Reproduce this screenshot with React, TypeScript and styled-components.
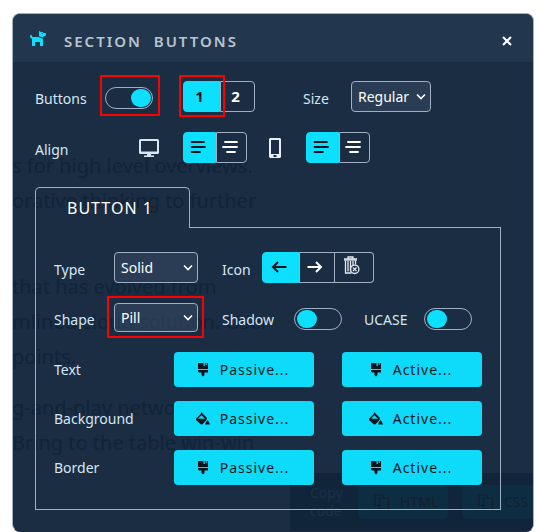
import React, { useId, useState } from "react";
import styled, { createGlobalStyle, css } from "styled-components";
import { FaDog } from "react-icons/fa";

const c = {
  panel: "#1b2d42",
  header: "#22374d",
  field: "rgba(54, 75, 100, 0.55)",
  line: "#a0b0c4",
  label: "#d5e6f5",
  accent: "#0ddfff",
  ink: "#0b1620",
  ghost: "#10243a",
};

const GlobalStyle = createGlobalStyle`
  *, *::before, *::after { box-sizing: border-box; }
  body { margin: 0; background: #fff; overflow: hidden; }
  body, button, input, select { font-family: "Noto Sans", "Open Sans", sans-serif; font-size: 14px; }
`;

const Page = styled.main`
  padding: 13px 6px 0 12px;
`;

const Panel = styled.section`
  position: relative;
  overflow: hidden;
  isolation: isolate;
  padding-bottom: 21px;
  border: 1px solid ${c.line};
  border-bottom-color: ${c.panel};
  border-radius: 8px;
  background: ${c.panel};
  color: ${c.label};
`;

const Backdrop = styled.div`
  position: absolute;
  inset: 0;
  z-index: -1;
  color: ${c.ghost};
  pointer-events: none;
`;

const Article = styled.div`
  position: absolute;
  top: 134px;
  left: -1px;
  font-size: 20px;
  line-height: 35px;
  white-space: pre;
  p { margin: 0 0 16px; min-height: 35px; }
`;

const CopyBar = styled.div`
  position: absolute;
  top: 459px;
  left: 277px;
  right: -60px;
  bottom: 0;
  display: flex;
  align-items: center;
  gap: 14px;
  padding-left: 20px;
  border-radius: 6px 0 0 0;
  background: #10243a;
  color: #1d3146;
  line-height: 18px;
`;

const CopyLabel = styled.span`
  flex: none;
  width: 34px;
`;

const CopyChip = styled.span`
  display: flex;
  flex: none;
  align-items: center;
  gap: 10px;
  width: 90px;
  height: 34px;
  padding-left: 16px;
  border-radius: 4px;
  background: #0c2d42;
  color: #14202f;
`;

const Header = styled.header`
  display: flex;
  align-items: center;
  height: 48px;
  padding: 5px 19px 0 16px;
  background: ${c.header};
`;

const DogIcon = styled(FaDog)`
  width: 18px;
  height: 18px;
  margin-bottom: 6px;
  color: ${c.accent};
`;

const Title = styled.h1`
  flex: 1;
  margin: 0 0 0 17px;
  color: #b9c4d0;
  font-size: 15px;
  font-weight: 600;
  letter-spacing: 2px;
  white-space: pre;
`;

const CloseButton = styled.button`
  display: flex;
  padding: 2px;
  border: 0;
  background: none;
  color: #fff;
  cursor: pointer;
`;

const Row = styled.div<{ $cols: string; $height?: number }>`
  display: grid;
  grid-template-columns: ${(p) => p.$cols};
  align-items: center;
  height: ${(p) => p.$height ?? 31}px;
`;

const Toolbar = styled.div`
  display: grid;
  gap: 20px;
  padding: 19px 22px 24px;
`;

const labelText = css`
  padding-top: 4px;
  line-height: 20px;
`;

const Label = styled.label`
  ${labelText}
`;

const Caption = styled.span<{ $flush?: boolean }>`
  ${labelText}
  ${(p) => p.$flush && "padding-top: 0;"}
`;

const Marked = styled.span<{ $inset?: string }>`
  position: relative;
  display: flex;
  width: fit-content;
  ${(p) =>
    p.$inset &&
    css`
      &::after {
        content: "";
        position: absolute;
        z-index: 1;
        inset: ${p.$inset};
        border: 2px solid #ff0000;
        pointer-events: none;
      }
    `}
`;

const Switch = styled.input`
  appearance: none;
  width: 48px;
  height: 22px;
  margin: 3px 0 0;
  padding: 1px;
  border: 1px solid ${c.line};
  border-radius: 11px;
  cursor: pointer;
  &::before {
    content: "";
    display: block;
    width: 20px;
    height: 18px;
    margin-left: 1px;
    border-radius: 9px;
    background: ${c.accent};
  }
  &:checked::before { margin-left: 24px; }
`;

const SelectBox = styled.span<{ $wide?: boolean; $height?: number }>`
  position: relative;
  display: flex;
  width: ${(p) => (p.$wide ? 84 : 80)}px;
  height: ${(p) => p.$height ?? 31}px;
  svg {
    position: absolute;
    right: 5px;
    top: 50%;
    transform: translateY(-50%);
    pointer-events: none;
  }
`;

const SelectInput = styled.select`
  appearance: none;
  width: 100%;
  padding: 0 0 0 6px;
  border: 1px solid ${c.line};
  border-radius: 4px;
  background: ${c.field};
  color: #fff;
  line-height: 20px;
`;

const Segments = styled.div`
  display: flex;
  width: fit-content;
  height: 31px;
`;

const Segment = styled.label<{ $width: number }>`
  position: relative;
  display: flex;
  align-items: center;
  justify-content: center;
  width: ${(p) => p.$width}px;
  padding: 0 4px 2px 0;
  border: 1px solid ${c.line};
  color: #fff;
  font-size: 15px;
  font-weight: 700;
  cursor: pointer;
  & + & { border-left-width: 0; }
  &:first-child { border-radius: 4px 0 0 4px; }
  &:last-child { border-radius: 0 4px 4px 0; }
  &:has(input:checked) {
    border-color: ${c.accent};
    background: ${c.accent};
    color: ${c.ink};
  }
  &:has(input:checked) + & { border-left-width: 1px; }
  input { position: absolute; inset: 0; margin: 0; opacity: 0; cursor: pointer; }
`;

const TabList = styled.div`
  display: flex;
  padding: 0 22px;
`;

const Tab = styled.button`
  position: relative;
  z-index: 1;
  height: 41px;
  margin-bottom: -1px;
  padding: 0 36px 0 31px;
  border: 1px solid ${c.line};
  border-bottom: 0;
  border-radius: 5px 5px 0 0;
  background: transparent;
  color: #fff;
  font-size: 16px;
  letter-spacing: 1px;
`;

const TabPanel = styled.div`
  position: relative;
  margin: 0 32px 0 22px;
  padding: 25px 18px 24px;
  border: 1px solid ${c.line};
  border-top: 0;
  &::before {
    content: "";
    position: absolute;
    top: 0;
    left: 154px;
    right: 0;
    border-top: 1px solid ${c.line};
  }
`;

const Settings = styled.div`
  display: grid;
  gap: 20px;
`;

const Swatches = styled.div`
  display: grid;
  gap: 14px;
  margin-top: 20px;
`;

const SwatchRow = styled.div`
  display: grid;
  grid-template-columns: 92px 1fr 1fr;
  column-gap: 28px;
  align-items: center;
`;

const ColorButton = styled.button`
  display: flex;
  align-items: center;
  justify-content: center;
  gap: 9px;
  height: 35px;
  padding: 0 4px 0 0;
  border: 0;
  border-radius: 4px;
  background: rgba(13, 225, 255, 0.97);
  color: ${c.ink};
  letter-spacing: 1px;
  cursor: pointer;
`;

const Chevron = () => (
  <svg width="10" height="8" viewBox="0 0 10 8" fill="none" stroke="#fff" strokeWidth="1.6">
    <path d="M1 1.5 5 5.5 9 1.5" />
  </svg>
);

const CloseIcon = () => (
  <svg width="10" height="10" viewBox="0 0 10 10" stroke="currentColor" strokeWidth="2">
    <path d="M1 1 9 9M9 1 1 9" />
  </svg>
);

const AlignStart = () => (
  <svg width="16" height="14" viewBox="0 0 16 14" stroke="currentColor" strokeWidth="1.8" strokeLinecap="round">
    <path d="M1.500 2h12.500M1.500 7h13.500M1.500 12h8.500" />
  </svg>
);

const AlignMiddle = () => (
  <svg width="16" height="14" viewBox="0 0 16 14" stroke="currentColor" strokeWidth="1.8" strokeLinecap="round">
    <path d="M3 2h12M1 7h14M5 12h8" />
  </svg>
);

const Arrow = ({ back }: { back?: boolean }) => (
  <svg width="16" height="12" viewBox="0 0 16 12" fill="none" stroke="currentColor" strokeWidth="2">
    <path d={back ? "M7 1 2 6l5 5M2 6h13.500" : "M9 1l5 5-5 5M14 6H.5"} />
  </svg>
);

const Monitor = () => (
  <svg width="20" height="18" viewBox="0 0 20 18">
    <path
      fill={c.label}
      fillRule="evenodd"
      d="M1.500 0h17A1.500 1.500 0 0 1 20 1.500v12a1.500 1.500 0 0 1-1.500 1.500H12v1.500h3V18H5v-1.500h3V15H1.500A1.500 1.500 0 0 1 0 13.500v-12A1.500 1.500 0 0 1 1.500 0zM2 2v10.500h16V2z"
    />
  </svg>
);

const Phone = () => (
  <svg width="12" height="20" viewBox="0 0 12 20">
    <path
      fill="#e6f1fb"
      fillRule="evenodd"
      d="M1 0h10l1 1v18l-1 1H1l-1-1V1zM2 2v14h8V2zM4.500 17v2h3v-2z"
    />
  </svg>
);

const TrashX = () => (
  <svg width="18" height="22" viewBox="0 0 18 22" fill="none" stroke="#e3ebf3" strokeWidth="1.300">
    <path d="M1 3h13M5 2.500V1h5v1.500M2.500 4.500v12.500h6M12.500 4.500v4M5 5v10.500M7.500 5v10.500M10 5v4" />
    <path d="M1 4h13" />
    <circle cx="11.700" cy="13.300" r="4.200" />
    <path d="m9.900 11.500 3.600 3.600m0-3.600-3.600 3.600" />
  </svg>
);

const Brush = () => (
  <svg width="16" height="14" viewBox="0 0 16 14" fill="currentColor">
    <path d="M3 0h5.500v3h1.300V0h.9v2h1V0H13v6H3zM3 7h10v2.500H9.500V12L8 13.500 6.500 12V9.500H4L3 8.500z" />
  </svg>
);

const Bucket = () => (
  <svg width="16" height="14" viewBox="0 0 16 14" fill="currentColor">
    <path
      fillRule="evenodd"
      d="M6.500 0 8 2l4 4-.6 2-3.900 4.200-1 .3-1.200-.5L1 8V6.800L5.500 2.300zM6.500 3.200 3 6.700h7L6.500 3.200z"
    />
    <path d="M12.500 8.200c1 1 2.300 2.600 2.300 4.300h-4.600c0-1.700 1.300-3.300 2.300-4.300z" />
  </svg>
);

const CopyIcon = () => (
  <svg width="16" height="16" viewBox="0 0 16 16" fill="none" stroke="currentColor" strokeWidth="1.200">
    <path d="M5 11.500H1V1h8v2M5.500 4h9v11h-9z" />
  </svg>
);

function Select(props: { id: string; options: string[]; wide?: boolean; height?: number }) {
  return (
    <SelectBox $wide={props.wide} $height={props.height}>
      <SelectInput id={props.id}>
        {props.options.map((o) => (
          <option key={o}>{o}</option>
        ))}
      </SelectInput>
      <Chevron />
    </SelectBox>
  );
}

type Choice = { name: string; width: number; view: React.ReactNode };

function Choices({ legend, items }: { legend: string; items: Choice[] }) {
  const group = useId();
  const [active, setActive] = useState(0);
  return (
    <Segments role="radiogroup" aria-label={legend}>
      {items.map((item, i) => (
        <Segment key={item.name} $width={item.width}>
          <input
            type="radio"
            name={group}
            aria-label={item.name}
            checked={active === i}
            onChange={() => setActive(i)}
          />
          {item.view}
        </Segment>
      ))}
    </Segments>
  );
}

const alignChoices: Choice[] = [
  { name: "Left", width: 33, view: <AlignStart /> },
  { name: "Center", width: 31, view: <AlignMiddle /> },
];

const swatches = [
  { name: "Text", icon: <Brush /> },
  { name: "Background", icon: <Bucket /> },
  { name: "Border", icon: <Brush /> },
];

export default function App() {
  return (
    <>
      <GlobalStyle />
      <Page>
        <Panel role="dialog" aria-labelledby="panel-title">
          <Backdrop aria-hidden="true">
            <Article>
              <p>{"s for high level overviews.\norative thinking to further\n "}</p>
              <p>{"that has evolved from\nmlined cloud solution. User\npoints."}</p>
              <p>{"g-and-play networks.\nBring to the table win-win"}</p>
            </Article>
            <CopyBar>
              <CopyLabel>Copy code</CopyLabel>
              <CopyChip><CopyIcon />HTML</CopyChip>
              <CopyChip><CopyIcon />CSS</CopyChip>
            </CopyBar>
          </Backdrop>

          <Header>
            <DogIcon />
            <Title id="panel-title">{"SECTION  BUTTONS"}</Title>
            <CloseButton aria-label="Close"><CloseIcon /></CloseButton>
          </Header>

          <Toolbar>
            <Row $cols="70px 78px 120px 48px auto">
              <Label htmlFor="buttons">Buttons</Label>
              <Marked $inset="-9px -7px -7px -5px">
                <Switch type="checkbox" role="switch" id="buttons" defaultChecked />
              </Marked>
              <Marked $inset="-6px 30px -5px -4px">
                <Choices
                  legend="Button count"
                  items={[
                    { name: "1", width: 37, view: "1" },
                    { name: "2", width: 35, view: "2" },
                  ]}
                />
              </Marked>
              <Label htmlFor="size">Size</Label>
              <Select id="size" options={["Regular", "Small", "Large"]} />
            </Row>
            <Row $cols="104px 44px 86px 37px auto">
              <Caption>Align</Caption>
              <Monitor />
              <Choices legend="Desktop alignment" items={alignChoices} />
              <Phone />
              <Choices legend="Mobile alignment" items={alignChoices} />
            </Row>
          </Toolbar>

          <TabList role="tablist">
            <Tab type="button" role="tab" id="tab-1" aria-selected="true" aria-controls="tab-panel-1">
              BUTTON 1
            </Tab>
          </TabList>
          <TabPanel role="tabpanel" id="tab-panel-1" aria-labelledby="tab-1">
            <Settings>
              <Row $cols="60px 108px 40px auto">
                <Label htmlFor="type">Type</Label>
                <Select id="type" wide options={["Solid", "Outline"]} />
                <Caption>Icon</Caption>
                <Choices
                  legend="Icon"
                  items={[
                    { name: "Before", width: 37, view: <Arrow back /> },
                    { name: "After", width: 36, view: <Arrow /> },
                    { name: "None", width: 39, view: <TrashX /> },
                  ]}
                />
              </Row>
              <Row $cols="60px 108px 72px 70px 60px auto" $height={29}>
                <Label htmlFor="shape">Shape</Label>
                <Marked $inset="-7px -6px -6px -7px">
                  <Select id="shape" wide height={29} options={["Pill", "Square"]} />
                </Marked>
                <Label htmlFor="shadow">Shadow</Label>
                <Switch type="checkbox" role="switch" id="shadow" />
                <Label htmlFor="ucase">UCASE</Label>
                <Switch type="checkbox" role="switch" id="ucase" />
              </Row>
            </Settings>
            <Swatches>
              {swatches.map((s) => (
                <SwatchRow key={s.name}>
                  <Caption $flush>{s.name}</Caption>
                  <ColorButton type="button">{s.icon}Passive...</ColorButton>
                  <ColorButton type="button">{s.icon}Active...</ColorButton>
                </SwatchRow>
              ))}
            </Swatches>
          </TabPanel>
        </Panel>
      </Page>
    </>
  );
}
